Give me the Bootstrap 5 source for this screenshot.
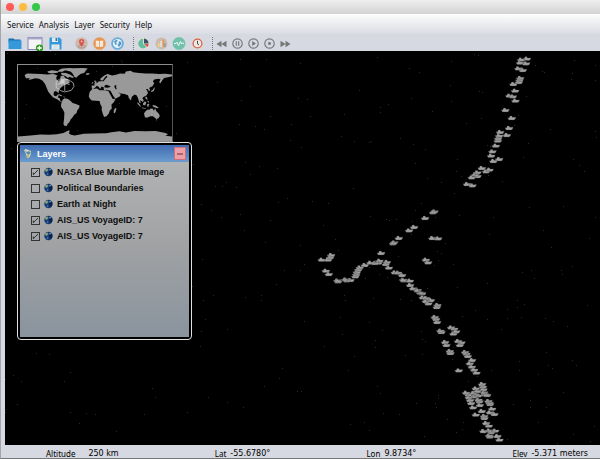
<!DOCTYPE html>
<html lang="en">
<head>
<meta charset="utf-8">
<meta name="viewport" content="width=device-width, initial-scale=1">
<title>Vessel tracks</title>
<link href="https://cdn.jsdelivr.net/npm/bootstrap@5.3.0/dist/css/bootstrap.min.css" rel="stylesheet">
<style>
body{font-family:"Noto Sans",sans-serif;font-size:8px;line-height:12px;color:#111;background:#d6d9e1}
.app{border-left:1px solid #a5a5a8;border-bottom:1px solid #777}
.titlebar{height:14px;padding-left:5px;gap:5px;background:linear-gradient(#efefef,#d3d3d3)}
.light{width:8px;height:8px;border-radius:50%}
.light-close{background:#fc5b57}.light-min{background:#fdbc40}.light-max{background:#34c84a}
.menus{height:20px;padding:5px 0 0 6px;gap:5px;background:linear-gradient(#fdfdfd,#d9dce3)}
.menus a{color:#111;text-decoration:none}
.tools{height:17px;padding:2px 0 0 4px}
.tools button{border:0;background:none;padding:0;height:15px;display:flex;align-items:center;justify-content:center}
.file-tools button{width:20px}
.view-tools button{width:18px}
.play-tools button{width:16px}
.file-tools{margin-right:7px}
.sep{width:1px;height:13px;border-left:1px dotted #777}
.sep-a{margin-left:7px}.sep-b{margin-left:6px}
.scene{background:#000;margin-left:4px;min-height:0}
.tracks{position:absolute;inset:0;width:100%;height:100%}
.overlay{padding:13px 0 0 12px}
.world{width:156px;height:78px;border:1px solid #8d8d8d;border-right-color:#555;display:block}
.layers{width:175px;min-height:198px;border:1px solid #e0e0e0;border-radius:4px;background:#000;padding:2px;font-family:"Liberation Sans",Arial,sans-serif;font-weight:700;font-size:9px}
.layers-head{height:17px;padding:0 3px 0 4px;gap:5px;color:#fff;background:linear-gradient(#416bb0,#6b9cce)}
.layers-head h1{font-size:9px;line-height:16px;font-weight:700;margin:0}
.collapse-btn{width:12px;height:13px;padding:0;border:1px solid #ce6e78;background:#eb9fa8;display:flex;align-items:center;justify-content:center}
.layers-body{padding:2px 0 0 11px;background:linear-gradient(#b1b2b4,#9fa1a3 50%,#8a949e)}
.layer-row{height:16px;gap:4px;color:#0d0d0d}
.layer-row input{appearance:none;width:9px;height:9px;margin:0;border:1px solid #333;background:transparent no-repeat center}
.layer-row input:checked{background-image:url("data:image/svg+xml,%3Csvg xmlns='http://www.w3.org/2000/svg' viewBox='0 0 8 8'%3E%3Cpath d='M1.5 4v2.5L7 1' fill='none' stroke='%23222'/%3E%3C/svg%3E")}
.status{height:13px;padding:5px 12px 0 45px;line-height:8px;color:#000}
.status dl{gap:13px}
.status dt{font-weight:400}
.status dd{font-family:"DejaVu Sans",sans-serif}
.status .near{gap:4px}
</style>
<script src="https://cdn.jsdelivr.net/npm/bootstrap@5.3.0/dist/js/bootstrap.bundle.min.js"></script>
</head>
<body>
<svg width="0" height="0" class="position-absolute" aria-hidden="true">
<defs>
<symbol id="globe" viewBox="0 0 10 10"><circle cx="5" cy="5" r="4.7" fill="#153b70"/><path d="M1 2l3-1 1 2-2 2-2-1z" fill="#819b78"/><path d="M5.5 4.5L8 3l1.2 1-.7 3-2 1z" fill="#0a1f47"/><path d="M6 1.3l2 1-1.5 1z" fill="#8ec6e4"/><path d="M3 6l2 1-1 2z" fill="#5286bd"/></symbol>
</defs>
</svg>
<div class="app d-flex flex-column vh-100">
  <header class="titlebar d-flex align-items-center">
    <span class="light light-close"></span><span class="light light-min"></span><span class="light light-max"></span>
  </header>
  <nav class="menus d-flex" aria-label="Main menu">
    <a href="#">Service</a><a href="#">Analysis</a><a href="#">Layer</a><a href="#">Security</a><a href="#">Help</a>
  </nav>
  <div class="tools d-flex align-items-center" role="toolbar" aria-label="Tools">
    <div class="file-tools d-flex">
      <button aria-label="Open"><svg width="14" height="13" viewBox="0 0 14 13"><path d="M.5 1.5h5l1 1h6v3H.5z" fill="#1b6fae"/><path d="M.5 3.5h13V12H.5z" fill="#3498db"/></svg></button>
      <button aria-label="New window"><svg width="17" height="16" viewBox="0 0 17 16"><rect x="1" y="1.500" width="14" height="12" fill="#f5f5f6" stroke="#8885ad"/><path d="M1 2.500h14" stroke="#aaa8cb" stroke-width="2"/><circle cx="12.500" cy="12" r="3.600" fill="#279b18"/><path d="M12.500 9.700v4.600M10.200 12h4.600" stroke="#fff" stroke-width="1.300"/></svg></button>
      <button aria-label="Save"><svg width="13" height="13" viewBox="0 0 13 13"><path d="M.5 .5h10l2 2v10H.5z" fill="#3498db"/><path d="M3 .5h6V5H3z" fill="#e8ecee"/><path d="M6.500 1h1.800v3H6.500z" fill="#2778b3"/><path d="M2.500 7.500h8v5h-8z" fill="#f4f4f4"/><path d="M3.500 9h6M3.500 11h6" stroke="#b5c4cc" stroke-width=".7"/></svg></button>
    </div>
    <div class="view-tools d-flex">
      <button aria-label="Pin"><svg width="13" height="13" viewBox="0 0 13 13"><circle cx="6.500" cy="6.500" r="6.200" fill="#cdb9ad"/><ellipse cx="6.500" cy="9.500" rx="3.500" ry="1.500" fill="none" stroke="#a99185"/><path d="M6.500 10C5 7 4 6 4 4.500a2.600 2.600 0 015.200 0C9.200 6 8 7 6.500 10z" fill="#d9534c"/><circle cx="6.600" cy="4.400" r=".9" fill="#f1c7c0"/></svg></button>
      <button aria-label="Book"><svg width="13" height="13" viewBox="0 0 13 13"><circle cx="6.500" cy="6.500" r="6.300" fill="#e69756"/><path d="M2.800 3.500l3.700.5 3.700-.5v6l-3.700.5-3.700-.5z" fill="#f5ead8"/><path d="M6.500 4v6" stroke="#cfa886" stroke-width=".8"/></svg></button>
      <button aria-label="Globe"><svg width="13" height="13" viewBox="0 0 13 13"><circle cx="6.500" cy="6.500" r="6.300" fill="#69add8"/><circle cx="6.500" cy="6.500" r="4.500" fill="#e6f2f9"/><path d="M3 4.500l2.500-2L7 4 5 5l1 2-1.500 1zM8 4l2 1 .5 2L8 10 6.500 8l1-1z" fill="#5499c9"/></svg></button>
    </div>
    <span class="sep sep-a"></span>
    <div class="view-tools d-flex">
      <button aria-label="Pie chart"><svg width="13" height="13" viewBox="0 0 13 13"><circle cx="6.500" cy="6.500" r="6.100" fill="#dfe0cf"/><path d="M6 1.800v5l3.300 3.300A4.800 4.800 0 116 1.800z" fill="#61bda1"/><path d="M7 1.600A4.700 4.700 0 0111.500 6.500H7z" fill="#3e5069"/><path d="M7.200 7h4.400c0 1.200-.6 2.400-1.500 3z" fill="#d9534f"/></svg></button>
      <button aria-label="Bar chart"><svg width="13" height="13" viewBox="0 0 13 13"><circle cx="6.500" cy="6.500" r="6" fill="#cdbab0"/><path d="M3 6h1.500v4H3z" fill="#f1d580"/><path d="M5.300 4h1.600v6H5.300z" fill="#e9e4df"/><path d="M7.700 2.500h1.800V10H7.700z" fill="#df9a57"/><path d="M9.500 6h1v4h-1z" fill="#6a94a7"/></svg></button>
      <button aria-label="Signal"><svg width="14" height="13" viewBox="0 0 14 13"><circle cx="7" cy="6.500" r="6.400" fill="#72c1aa"/><path d="M2 6.500h2l1-1.300L6.500 8.500l2-4L9.800 7l.8-.8H12" fill="none" stroke="#f2faf7"/></svg></button>
      <button aria-label="Clock"><svg width="13" height="13" viewBox="0 0 13 13"><circle cx="6.500" cy="6.500" r="6.200" fill="#dfdccb"/><circle cx="6.500" cy="6.500" r="4.400" fill="#ebe9e4" stroke="#d75f57" stroke-width="1.300"/><path d="M6.500 3.800v3L8 8" fill="none" stroke="#444"/></svg></button>
    </div>
    <span class="sep sep-b"></span>
    <div class="play-tools d-flex">
      <button aria-label="Rewind"><svg width="11" height="8" viewBox="0 0 11 8"><path d="M5.500 .8v6.400L.5 4zM10.500 .8v6.400L5.500 4z" fill="#777"/></svg></button>
      <button aria-label="Pause"><svg width="11" height="11" viewBox="0 0 11 11" fill="none" stroke="#7b7b7d" stroke-width="1.200"><circle cx="5.500" cy="5.500" r="4.700"/><path d="M4.300 3.300v4.400M6.700 3.300v4.400"/></svg></button>
      <button aria-label="Play"><svg width="11" height="11" viewBox="0 0 11 11"><circle cx="5.500" cy="5.500" r="4.700" fill="none" stroke="#7b7b7d" stroke-width="1.200"/><path d="M4.200 3L8 5.500 4.200 8z" fill="#777"/></svg></button>
      <button aria-label="Stop"><svg width="11" height="11" viewBox="0 0 11 11"><circle cx="5.500" cy="5.500" r="4.700" fill="none" stroke="#7b7b7d" stroke-width="1.200"/><path d="M4.300 4.300h2.400v2.400H4.300z" fill="#666"/></svg></button>
      <button aria-label="Fast forward"><svg width="11" height="8" viewBox="0 0 11 8"><path d="M.5 .8v6.400l5-3.200zM5.500 .8v6.400l5-3.200z" fill="#777"/></svg></button>
    </div>
  </div>
  <main class="scene position-relative flex-grow-1">
    <svg class="tracks" viewBox="5 51 595 394" preserveAspectRatio="xMinYMin" role="img" aria-label="Vessel positions">
      <path id="stars" fill="none" stroke="#2b2b26" stroke-width="1"/>
      <path id="ships" fill="#a0a0a0" stroke="#4c4c4c" stroke-width=".3"/>
    </svg>
    <div class="overlay position-relative">
      <svg class="world" viewBox="22 18 468 234" preserveAspectRatio="none" role="img" aria-label="World overview">
        <g fill="#999">
          <path d="M42 49L50 44 72 45 92 46 110 47 130 46 142 50 138 56 140 64 146 68 150 60 152 52 160 50 166 58 174 62 180 72 168 78 160 82 152 88 147 94 145 106 141 100 134 98 130 104 131 112 138 114 142 110 146 111 143 118 149 120 150 127 156 130 152 131 142 124 128 117 122 110 114 100 108 86 104 76 96 66 86 60 74 59 64 62 54 64 58 59 46 59 44 54z"/>
          <path d="M111 38l14-4 12 2 10 2-5 4-18 2-10-2zM144 34l12-5 22-2 12 2-12 5-14 1-7 4-11-1zM153 42l14 1 13 4 12 8-4 3-10-4-4 4-8-6-12-4z"/>
          <path d="M165 31L190 28 220 27 234 29 228 35 224 42 212 46 205 51 199 57 193 54 189 46 183 39 172 36zM229 44l8-1 3 3-7 3-5-2z"/>
          <path d="M158 124L164 120 174 123 182 129 188 135 198 138 209 143 208 150 202 158 200 166 193 171 188 179 182 186 178 194 173 199 170 206 163 205 160 200 162 184 163 165 159 156 153 147 153 138z"/>
          <path d="M237 114L240 100 248 92 262 90 270 96 284 96 296 97 302 108 310 123 318 122 314 132 306 140 307 152 301 158 298 167 291 176 284 178 280 170 276 155 277 148 272 138 270 129 258 128 246 127 240 121z"/>
          <path d="M316 153l4-3 1 4-4 12-4 0 0-8zM253 68l4-3 2 5 3 3-2 3-7 0 3-4zM247 72l4-1-1 4-4 1z"/>
          <path d="M246 90V81H255L254 77 263 73 268 68 282 68 288 60 294 54 290 51 283 60 280 66 273 65 272 60 284 50 294 46 308 50 320 48 332 44 346 45 350 38 364 36 372 40 390 43 410 44 430 44 450 46 470 45 490 47V53L478 56 466 58 460 66 455 74 451 71 455 62 448 60 436 63 432 68 436 74 430 84 424 86 421 90 424 96 420 98 416 92 411 92 415 98 417 105 412 112 402 117 400 121 404 126 402 132 397 129 393 126 395 136 391 134 387 121 383 112 376 109 368 116 365 127 361 123 356 111 346 107 334 106 326 101 334 109 332 114 318 122 312 114 303 97 292 94 284 96 282 91 284 88 276 84 272 92 267 85 261 82 256 88 250 92z"/>
          <path d="M284 83l6-4 9 3 5 3-9 3-9-1zM316 80l5 0-1 6 2 7-3 0-4-7z" fill="#000"/>
          <path d="M405 168L408 162 416 155 422 156 424 152 432 153 435 159 439 151 442 160 450 168 453 175 449 182 442 184 436 179 432 176 424 176 416 180 408 180zM441 186l4 0-2 4z"/>
          <path d="M385 132l6 6 5 8-3 0-8-9zM402 136l5-6 5 2-3 10-7-1zM414 140l4-3 4 1-3 3 0 6-4-1zM430 141l10 2 10 7-4 1-12-4zM398 149l13 2 0 2-12-2zM409 116l4 0 3 8-2 1-5-5zM416 128l4 2-1 4-4-3zM426 98l6-4 4-7 2 1-3 10-8 3z"/>
          <path d="M139 110l9-2 9 5-3 1-8-3zM158 115l7 1-2 2z"/>
          <path d="M22 238L60 235 90 232 116 233 140 231 160 227 175 220 179 220 177 229 183 233 194 235 222 230 250 229 290 228 306 225 330 222 350 226 376 221 410 222 440 221 470 227 478 231 470 236 490 238V252H22z"/>
        </g>
        <path d="M148 62l-10 7v18l14 10 12 4 20-5 8-12-2-11-13-9-13-2v36M141 78l9-3 6 3M169 75l10 3" fill="none" stroke="#ddd" stroke-width="2"/>
        <path d="M154 60l8 2 0 14-13-1z" fill="#ccc"/>
      </svg>
      <section class="layers d-flex flex-column">
        <div class="layers-head d-flex align-items-center">
          <svg width="8" height="10" viewBox="0 0 8 10"><path d="M0 1l2-1 5 2v3L5 9H3L2 5z" fill="#d0d5c2"/><path d="M1 2l2 1 2-1 2 2-3 2z" fill="#568f99"/><path d="M3 6h2v3H3z" fill="#c9bd72"/></svg>
          <h1 class="flex-grow-1">Layers</h1>
          <button class="collapse-btn" aria-label="Collapse"><svg width="6" height="2" viewBox="0 0 6 2"><path d="M0 0h6v2H0z" fill="#b3616b"/></svg></button>
        </div>
        <div class="layers-body flex-grow-1">
          <label class="layer-row d-flex align-items-center"><input type="checkbox" checked><svg width="9" height="10"><use href="#globe"/></svg>NASA Blue Marble Image</label>
          <label class="layer-row d-flex align-items-center"><input type="checkbox"><svg width="9" height="10"><use href="#globe"/></svg>Political Boundaries</label>
          <label class="layer-row d-flex align-items-center"><input type="checkbox"><svg width="9" height="10"><use href="#globe"/></svg>Earth at Night</label>
          <label class="layer-row d-flex align-items-center"><input type="checkbox" checked><svg width="9" height="10"><use href="#globe"/></svg>AIS_US VoyageID: 7</label>
          <label class="layer-row d-flex align-items-center"><input type="checkbox" checked><svg width="9" height="10"><use href="#globe"/></svg>AIS_US VoyageID: 7</label>
        </div>
      </section>
    </div>
  </main>
  <footer class="status d-flex justify-content-between">
    <dl class="d-flex m-0"><dt>Altitude</dt><dd class="m-0">250 km</dd></dl>
    <dl class="near d-flex m-0"><dt>Lat</dt><dd class="m-0">-55.6780°</dd></dl>
    <dl class="near d-flex m-0"><dt>Lon</dt><dd class="m-0">9.8734°</dd></dl>
    <dl class="near d-flex m-0"><dt>Elev</dt><dd class="m-0">-5.371 meters</dd></dl>
  </footer>
</div>
<script>
// Vessel positions per track segment: origin, then points in thirds of a unit.
const segments = [
  [440,45,"243,45 260,42 240,54 258,56 235,71 248,76 240,100 238,106 236,112 220,118 225,138 208,153 218,155 226,168 196,196 215,220 207,250 180,262 200,271 177,273 174,281 173,288 167,303 157,320 153,333 160,349 177,343 125,370 148,375 138,380 112,383 105,390 95,398 112,394 81,418 97,422"],
  [310,200,"373,35 369,38 345,55 312,82 297,92 266,115 252,128 249,131 367,115 384,116 213,160 347,180 354,188 63,166 60,173 35,180 54,180 47,213 56,223 82,242 84,245 106,239 121,241 110,242 136,230 138,224 140,217 145,209 149,203 164,196 181,189 195,190 208,183 205,189 230,187 227,193 236,204 254,218 264,219 276,226 279,240 281,242 299,243 300,256 309,266 322,271 331,279"],
  [400,270,"66,71 68,83 78,85 92,91 77,94 85,101 112,106 110,112 104,142 108,148 111,157 121,183 124,187 153,173 162,177 168,185 160,192 135,217 139,226 174,214 184,218 179,226 149,244 151,250 195,247 199,252 203,259 216,271 209,281 215,291 222,300 229,309 176,302 52,62 60,69"],
  [430,360,"156,73 158,81 137,86 160,89 142,94 108,99 130,100 162,98 165,104 171,106 115,105 137,105 145,107 116,113 132,110 120,121 145,120 148,125 123,130 149,136 129,143 175,124 178,129 180,133 186,147 155,154 179,158 193,163 137,165 162,169 163,175 168,190 176,198 160,214 177,212 195,213 184,217 177,227 179,231 202,229 208,240"]
];
let ships = "";
for (const [ox, oy, list] of segments)
  for (const p of list.split(" ")) {
    const [x, y] = p.split(",").map(Number);
    ships += `M${(ox + x / 3 - 4).toFixed(1)} ${(oy + y / 3 - .6).toFixed(1)}l1.500 .2 .8-1.900 1.900 0 .4 1.300 3.600-.1-.8 2-1.200 .7-5 0z`;
  }
document.getElementById("ships").setAttribute("d", ships);
let seed = 7, stars = "";
const rand = () => (seed = seed * 16807 % 2147483647) / 2147483647;
for (let i = 0; i < 330; i++) stars += `M${Math.floor(5 + rand() * 594)} ${Math.floor(51 + rand() * 393) + .5}h1`;
document.getElementById("stars").setAttribute("d", stars);
</script>
</body>
</html>
